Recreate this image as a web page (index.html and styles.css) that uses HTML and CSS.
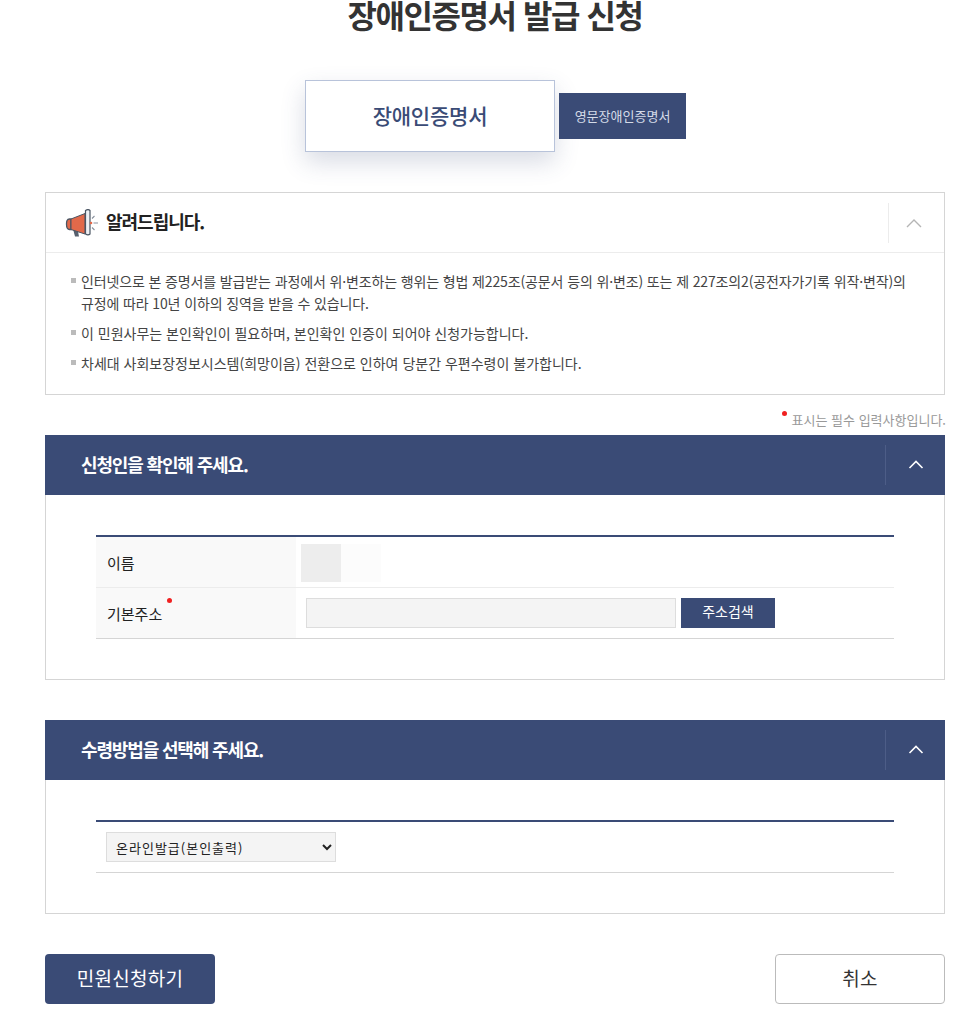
FILE: index.html
```html
<!DOCTYPE html>
<html lang="ko">
<head>
    <meta charset="UTF-8">
    <meta name="viewport" content="width=device-width, initial-scale=1.0">
    <title>장애인증명서 발급 신청</title>
    <link rel="stylesheet" href="styles.css">
</head>
<body>
    <div class="wrap">
        <h1 class="page-title">장애인증명서 발급 신청</h1>

        <div class="tabs">
            <a class="tab tab-on">장애인증명서</a>
            <a class="tab tab-off">영문장애인증명서</a>
        </div>

        <div class="notice">
            <div class="notice-head">
                <svg class="notice-icon" width="34" height="28" viewBox="0 0 34 28">
                    <path d="M8 20 L10 27.5 H14 L12.5 20 Z" fill="#56606e"/>
                    <path d="M6 10 H4.5 C2 10 1.5 12.5 1.5 15 C1.5 18 2.5 20.5 4.5 20.5 H6 Z" fill="#e2694a" stroke="#4a5563" stroke-width="1.3"/>
                    <path d="M6 10 L20 4.5 V25 L6 20.5 Z" fill="#e2694a" stroke="#4a5563" stroke-width="1"/>
                    <path d="M20.5 1.5 C22 0.5 24 0.5 25 1.5 V25 C24 26 22 26 20.5 25 Z" fill="#eef0f4" stroke="#4a5563" stroke-width="1.2"/>
                    <circle cx="26" cy="14" r="1.3" fill="#e2694a"/>
                    <path d="M27 9.5 L29.5 7 M28.5 14 H33 M27 18.5 L29.5 21" stroke="#8a929e" stroke-width="1.1" fill="none"/>
                </svg>
                <h2 class="notice-title">알려드립니다.</h2>
                <div class="notice-toggle">
                    <svg width="16" height="10" viewBox="0 0 16 10"><path d="M1 9 L8 2 L15 9" fill="none" stroke="#b5b5b5" stroke-width="1.4"/></svg>
                </div>
            </div>
            <ul class="notice-list">
                <li>인터넷으로 본 증명서를 발급받는 과정에서 위·변조하는 행위는 형법 제225조(공문서 등의 위·변조) 또는 제 227조의2(공전자가기록 위작·변작)의 규정에 따라 10년 이하의 징역을 받을 수 있습니다.</li>
                <li>이 민원사무는 본인확인이 필요하며, 본인확인 인증이 되어야 신청가능합니다.</li>
                <li>차세대 사회보장정보시스템(희망이음) 전환으로 인하여 당분간 우편수령이 불가합니다.</li>
            </ul>
        </div>

        <p class="required-note"><span class="dot"></span>표시는 필수 입력사항입니다.</p>

        <section class="panel">
            <div class="panel-head">
                <h3 class="panel-title">신청인을 확인해 주세요.</h3>
                <div class="panel-toggle">
                    <svg width="16" height="10" viewBox="0 0 16 10"><path d="M1.5 8 L8 1.5 L14.5 8" fill="none" stroke="#fff" stroke-width="1.6"/></svg>
                </div>
            </div>
            <div class="panel-body">
                <div class="form-table">
                    <div class="form-row row-name">
                        <div class="form-label">이름</div>
                        <div class="form-cell">
                            <span class="mask mask-dark"></span><span class="mask mask-light"></span>
                        </div>
                    </div>
                    <div class="form-row row-addr">
                        <div class="form-label"><span class="label-req">기본주소<span class="dot dot-label"></span></span></div>
                        <div class="form-cell addr-cell">
                            <input class="addr-input" type="text" readonly>
                            <button class="btn-search" type="button">주소검색</button>
                        </div>
                    </div>
                </div>
            </div>
        </section>

        <section class="panel panel-second">
            <div class="panel-head">
                <h3 class="panel-title">수령방법을 선택해 주세요.</h3>
                <div class="panel-toggle">
                    <svg width="16" height="10" viewBox="0 0 16 10"><path d="M1.5 8 L8 1.5 L14.5 8" fill="none" stroke="#fff" stroke-width="1.6"/></svg>
                </div>
            </div>
            <div class="panel-body">
                <div class="form-table select-row">
                    <select class="method-select">
                        <option>온라인발급(본인출력)</option>
                    </select>
                </div>
            </div>
        </section>

        <div class="actions">
            <button class="btn-apply" type="button">민원신청하기</button>
            <button class="btn-cancel" type="button">취소</button>
        </div>
    </div>
</body>
</html>
```

FILE: styles.css
```css
* {
    box-sizing: border-box;
}
body {
    margin: 0;
    background-color: #fff;
    color: #333;
    font-family: "Noto Sans CJK KR", "Noto Sans", sans-serif;
    font-size: 14px;
}
.wrap {
    width: 900px;
    margin-left: 45px;
    padding-bottom: 31px;
}
.page-title {
    margin: 0;
    height: 80px;
    text-align: center;
    font-size: 32px;
    font-weight: 700;
    line-height: 29px;
    letter-spacing: -1.45px;
    color: #333;
}
.tabs {
    display: flex;
    align-items: center;
    justify-content: center;
    gap: 4px;
    height: 72px;
    margin-left: 1px;
    margin-bottom: 40px;
}
.tab {
    display: flex;
    align-items: center;
    justify-content: center;
}
.tab-on {
    width: 250px;
    height: 72px;
    padding-bottom: 3px;
    background-color: #fff;
    border: 1px solid #b8c3da;
    box-shadow: 0 10px 25px rgba(60,75,120,0.2);
    color: #3a4b76;
    font-size: 21px;
    font-weight: 500;
    letter-spacing: -0.2px;
}
.tab-off {
    width: 127px;
    height: 46px;
    padding-bottom: 1px;
    background-color: #3a4b76;
    color: #d5dbe8;
    font-size: 13px;
}
.notice {
    border: 1px solid #d5d5d5;
    height: 203px;
}
.notice-head {
    display: flex;
    align-items: center;
    height: 60px;
    padding-left: 19px;
    border-bottom: 1px solid #ececec;
}
.notice-icon {
    flex: none;
    margin-right: 7px;
}
.notice-title {
    flex: 1;
    margin: 0 0 3px;
    font-size: 18px;
    font-weight: 700;
    letter-spacing: -1px;
    color: #222;
}
.notice-toggle {
    display: flex;
    align-items: center;
    justify-content: center;
    width: 56px;
    height: 40px;
    padding-right: 5px;
    border-left: 1px solid #ececec;
}
.notice-list {
    list-style: none;
    margin: 0;
    padding: 17px 36px 0 35px;
    font-size: 14px;
    line-height: 22px;
    letter-spacing: -0.13px;
    color: #444;
}
.notice-list li {
    position: relative;
    margin-bottom: 8px;
}
.notice-list li + li {
    letter-spacing: 0;
}
.notice-list li::before {
    content: "";
    position: absolute;
    left: -10px;
    top: 8px;
    width: 5px;
    height: 5px;
    background-color: #bbb;
}
.required-note {
    margin: 0;
    height: 40px;
    padding-top: 15px;
    width: 901px;
    text-align: right;
    font-size: 13px;
    line-height: 20px;
    color: #999;
}
.dot {
    display: inline-block;
    width: 5px;
    height: 5px;
    margin-right: 5px;
    border-radius: 50%;
    background-color: #f02020;
    vertical-align: 9px;
}
.panel-head {
    display: flex;
    align-items: center;
    height: 60px;
    padding-left: 36px;
    background-color: #3a4b76;
}
.panel-title {
    flex: 1;
    margin: 0 0 3px;
    font-size: 18px;
    font-weight: 700;
    letter-spacing: -1.15px;
    color: #fff;
}
.panel-toggle {
    display: flex;
    align-items: center;
    justify-content: center;
    width: 60px;
    height: 40px;
    border-left: 1px solid #4d5d87;
}
.panel-body {
    padding: 40px 50px;
    border: 1px solid #d5d5d5;
    border-top: none;
}
.panel-second {
    margin-top: 40px;
}
.form-table {
    border-top: 2px solid #3a4b76;
    border-bottom: 1px solid #d5d5d5;
}
.form-row {
    display: flex;
}
.row-name {
    height: 51px;
    border-bottom: 1px solid #ececec;
}
.row-addr {
    height: 50px;
}
.form-label {
    display: flex;
    align-items: center;
    width: 200px;
    padding-left: 11px;
    background-color: #f9f9f9;
    font-size: 15px;
    color: #222;
}
.label-req {
    position: relative;
}
.dot-label {
    position: absolute;
    right: -10px;
    top: -5px;
    margin: 0;
}
.form-cell {
    flex: 1;
    display: flex;
    align-items: center;
    padding-left: 5px;
}
.mask {
    display: block;
    width: 40px;
    height: 38px;
    margin-top: 2px;
}
.mask-dark {
    background-color: #ededed;
}
.mask-light {
    background-color: #fcfcfc;
}
.addr-cell {
    padding-left: 10px;
}
.addr-input {
    width: 370px;
    height: 30px;
    margin-right: 5px;
    border: 1px solid #ddd;
    background-color: #f4f4f4;
}
.btn-search {
    width: 94px;
    height: 30px;
    padding: 0 0 4px;
    border: none;
    background-color: #3a4b76;
    color: #fff;
    font-family: inherit;
    font-size: 14px;
}
.select-row {
    height: 53px;
    padding: 10px;
}
.method-select {
    display: block;
    width: 230px;
    height: 30px;
    padding-left: 5px;
    border: 1px solid #ddd;
    background-color: #f4f4f4;
    color: #222;
    font-family: inherit;
    font-size: 13px;
    letter-spacing: 1px;
}
.actions {
    display: flex;
    justify-content: space-between;
    margin-top: 40px;
}
.btn-apply,
.btn-cancel {
    width: 170px;
    height: 50px;
    padding: 0 0 4px;
    border-radius: 4px;
    font-family: inherit;
    font-size: 19px;
    letter-spacing: 0.3px;
}
.btn-apply {
    border: none;
    background-color: #3a4b76;
    color: #fff;
}
.btn-cancel {
    border: 1px solid #bbb;
    background-color: #fff;
    color: #333;
}
```
